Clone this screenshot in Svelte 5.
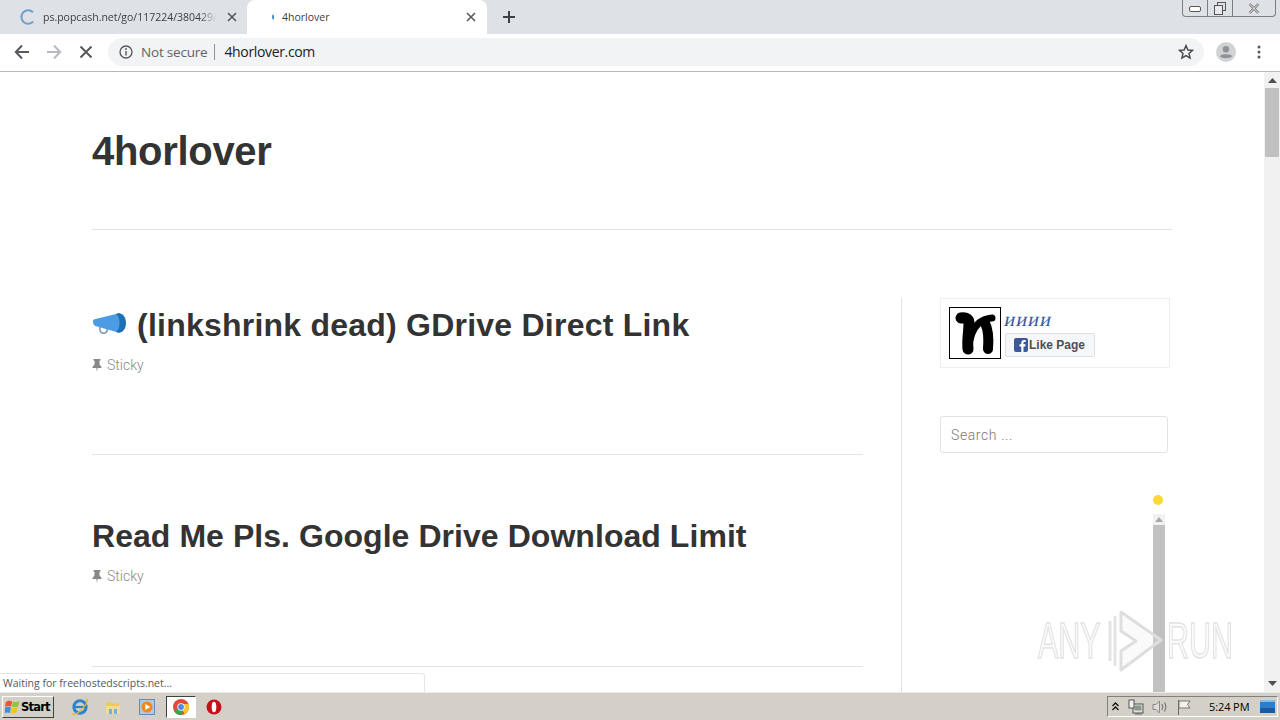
<script>
  const posts = [
    { title: '(linkshrink dead) GDrive Direct Link', icon: true },
    { title: 'Read Me Pls. Google Drive Download Limit', icon: false }
  ];
</script>

<div class="screen">
  <div class="tabstrip">
    <div class="tab inactive">
      <svg class="spinner" width="16" height="16" viewBox="0 0 16 16"><path d="M13 3.200A6.800 6.800 0 1 0 13.200 12.600" fill="none" stroke="#6f9fd0" stroke-width="2"/></svg>
      <span class="tabtitle fade">ps.popcash.net/go/117224/380429/</span>
      <svg class="tabx" width="10" height="10" viewBox="0 0 10 10"><path d="M1 1l8 8M9 1l-8 8" stroke="#55585c" stroke-width="1.600"/></svg>
    </div>
    <div class="tab active">
      <svg class="dot" width="4" height="6" viewBox="0 0 4 6"><path d="M2 0C3.400 2 3.400 4 2 6 .8 4 .8 2 2 0z" fill="#2f7fc8"/></svg>
      <span class="tabtitle">4horlover</span>
      <svg class="tabx" width="10" height="10" viewBox="0 0 10 10"><path d="M1 1l8 8M9 1l-8 8" stroke="#55585c" stroke-width="1.600"/></svg>
    </div>
    <svg class="plus" width="12" height="12" viewBox="0 0 12 12"><path d="M6 0v12M0 6h12" stroke="#3c4043" stroke-width="2"/></svg>
    <div class="winbtns">
      <div class="wb"><svg width="12" height="6" viewBox="0 0 12 6"><rect x=".5" y=".5" width="11" height="5" rx="1.500" fill="#fff" stroke="#555"/></svg></div>
      <div class="wb"><svg width="12" height="13" viewBox="0 0 12 13"><rect x="3.500" y=".5" width="8" height="8" fill="none" stroke="#555"/><rect x=".5" y="3.500" width="8" height="9" fill="#e6e9ee" stroke="#555"/></svg></div>
      <div class="wb wide"><svg width="12" height="11" viewBox="0 0 12 11"><path d="M1.500 1l9 9M10.500 1l-9 9" stroke="#666" stroke-width="2.400"/><path d="M1.500 1l9 9M10.500 1l-9 9" stroke="#fff" stroke-width="1"/></svg></div>
    </div>
  </div>

  <div class="toolbar">
    <svg class="nav" width="16" height="16" viewBox="0 0 16 16"><path d="M15 8H2M8 1.500L1.800 8 8 14.500" fill="none" stroke="#55585c" stroke-width="2"/></svg>
    <svg class="nav fwd" width="16" height="16" viewBox="0 0 16 16"><path d="M1 8h13M8 1.500L14.200 8 8 14.500" fill="none" stroke="#b6b9bd" stroke-width="2"/></svg>
    <svg class="nav stop" width="14" height="14" viewBox="0 0 14 14"><path d="M1.500 1.500l11 11M12.500 1.500l-11 11" stroke="#55585c" stroke-width="2"/></svg>
    <div class="omnibox">
      <svg width="14" height="14" viewBox="0 0 14 14"><circle cx="7" cy="7" r="6" fill="none" stroke="#55585c" stroke-width="1.300"/><path d="M7 6v4.400" stroke="#55585c" stroke-width="1.400"/><circle cx="7" cy="4" r=".9" fill="#55585c"/></svg>
      <span class="notsecure">Not secure</span>
      <span class="sep"></span>
      <span class="url">4horlover.com</span>
      <svg class="star" width="16" height="16" viewBox="0 0 16 16"><path d="M8 1.600l1.900 4.400 4.700.4-3.600 3.100 1.100 4.600L8 11.600l-4.100 2.500L5 9.500 1.400 6.400l4.700-.4z" fill="none" stroke="#44474a" stroke-width="1.400"/></svg>
    </div>
    <svg class="avatar" width="20" height="20" viewBox="0 0 20 20"><circle cx="10" cy="10" r="10" fill="#d0d2d4"/><circle cx="10" cy="7.200" r="3.200" fill="#8f9296"/><path d="M3.800 14.200c1.500-2.600 10.900-2.600 12.400 0-1.500 2.600-10.900 2.600-12.400 0z" fill="#8f9296"/></svg>
    <svg class="menu" width="4" height="14" viewBox="0 0 4 14"><circle cx="2" cy="2" r="1.500" fill="#55585c"/><circle cx="2" cy="7" r="1.500" fill="#55585c"/><circle cx="2" cy="12" r="1.500" fill="#55585c"/></svg>
  </div>

  <div class="viewport">
    <div class="page">
      <header class="site"><h1>4horlover</h1></header>
      <div class="layout">
        <main>
          {#each posts as post}
            <article>
              <h2>
                {#if post.icon}
                  <svg class="horn" width="35" height="24" viewBox="0 0 35 24"><path d="M1 9.500C1 8 2 7 3.500 7L28 1v20L12 16.500 3.500 14C2 13.500 1 12 1 9.500z" fill="#4b9ce2"/><path d="M24 2c5-2.500 10 1.500 10 9s-5 11-10 9c2.500-2 3.500-5 3.500-9S26.500 4 24 2z" fill="#1f6fb5"/><path d="M8 15c-1 5 2 7 5 6 2-.8 2.500-2.500 2-4" fill="none" stroke="#7d98ac" stroke-width="1.500"/></svg>
                {/if}
                {post.title}
              </h2>
              <div class="meta">
                <svg width="10" height="13" viewBox="0 0 10 13"><path d="M1.500 0h7v1.200L7.500 2v3.500L9.500 8v1H5.600L5 13l-.6-4H.5V8l2-2.500V2l-1-.8z" fill="#888"/></svg>
                <span>Sticky</span>
              </div>
            </article>
          {/each}
        </main>
        <aside>
          <div class="fb">
            <div class="logo">
              <svg width="50" height="50" viewBox="0 0 50 50"><path d="M11 10c5-1 8 1 8 5 0 9-2 17-1 26" fill="none" stroke="#000" stroke-width="11" stroke-linecap="round" stroke-linejoin="round"/><path d="M20 32c2-9 7-17 14-20 3-1 5-2 8-2" fill="none" stroke="#000" stroke-width="7" stroke-linecap="round"/><path d="M35 15c3 6 4 14 3 26" fill="none" stroke="#000" stroke-width="10" stroke-linecap="round"/></svg>
            </div>
            <div class="fbtext">
              <div class="fbname"><span>ииии</span></div>
              <div class="like">
                <svg width="14" height="14" viewBox="0 0 14 14"><rect width="14" height="14" rx="2" fill="#3b5998"/><path d="M9.500 14V8.500h1.800l.3-2.200H9.500V5c0-.7.2-1.100 1.100-1.100h1.100V2c-.3 0-.9-.1-1.600-.1-1.700 0-2.800 1-2.800 2.900v1.500H5.500v2.200h1.800V14z" fill="#fff"/></svg>
                <span>Like Page</span>
              </div>
            </div>
          </div>
          <div class="search">Search ...</div>
          <div class="widget">
            <div class="yellow"></div>
            <div class="miniup"><svg width="8" height="5" viewBox="0 0 8 5"><path d="M4 0l4 5H0z" fill="#a9a9a9"/></svg></div>
            <div class="minibar"></div>
          </div>
        </aside>
      </div>
    </div>
    <div class="scrollbar">
      <svg class="sb-up" width="9" height="5" viewBox="0 0 9 5"><path d="M4.500 0L9 5H0z" fill="#505050"/></svg>
      <div class="thumb"></div>
      <div class="sb-space"></div>
      <svg class="sb-down" width="9" height="5" viewBox="0 0 9 5"><path d="M4.500 5L9 0H0z" fill="#505050"/></svg>
    </div>

    <div class="status">Waiting for freehostedscripts.net...</div>
    <div class="watermark">
      <span class="wm-a">ANY</span>
      <svg width="56" height="64" viewBox="0 0 56 64">
        <path d="M2 12v40M7 7v50" fill="none" stroke="#e4e4e4" stroke-width="3"/>
        <path d="M13 3l40 28-40 30V42l15-10-15-10z" fill="rgba(235,235,235,.25)" stroke="#dedede" stroke-width="3" stroke-linejoin="round"/>
      </svg>
      <span class="wm-r">RUN</span>
    </div>
  </div>

  <div class="taskbar">
    <div class="start">
      <svg width="16" height="16" viewBox="0 0 20 18"><path d="M1 3c3-2 5-2 8-1L7.500 8.500C5 7.500 3 7.500 0 9z" fill="#e8562a"/><path d="M10 2c3 1 5 1 8-.5L16.500 8c-3 1.500-5 1.500-8 .5z" fill="#8cc63f"/><path d="M0 10c3-1.500 5-1.500 7.500-.5L6 16.500c-2-1-4-1-7 .5z" fill="#3c8fd8"/><path d="M8.500 9.500c3 1 5 1 7.500-.5L14.500 15.500c-3 1.500-5 1.500-8 .5z" fill="#f6c324"/></svg>
      <span>Start</span>
    </div>
    <div class="quick">
      <span class="qi"><svg width="18" height="18" viewBox="0 0 16 16"><circle cx="8" cy="8" r="5.500" fill="none" stroke="#2f82cf" stroke-width="2.600"/><path d="M3 8h10" stroke="#2f82cf" stroke-width="2"/><path d="M1 14c2 2 8-2 12-8 2-3 2-5 0-5" fill="none" stroke="#e5b53a" stroke-width="1.200"/></svg></span>
      <span class="qi"><svg width="16" height="16" viewBox="0 0 16 16"><path d="M1 3h5l1 1.500h7V15H1z" fill="#e9c96a"/><path d="M1 7h14v8H1z" fill="#f2dc90"/><path d="M4 15v-5h3v5zM9 15v-5h3v5z" fill="#6fb3d6"/></svg></span>
      <span class="qi"><svg width="16" height="16" viewBox="0 0 16 16"><rect x=".5" y=".5" width="15" height="15" fill="#a9cbe6" stroke="#5f8fc0"/><circle cx="8" cy="8" r="5.500" fill="#f08a1d"/><path d="M6.300 5l5 3-5 3z" fill="#fff"/></svg></span>
      <span class="qi chrome"><svg width="16" height="16" viewBox="0 0 16 16"><circle cx="8" cy="8" r="8" fill="#dd4b39"/><path d="M8 8L1 12a8 8 0 0 0 7 4 8 8 0 0 0 0-.1L11.500 9z" fill="#3da24d"/><path d="M8 8l3.500 7A8 8 0 0 0 15.500 5H8z" fill="#f8c52c"/><circle cx="8" cy="8" r="3.700" fill="#fff"/><circle cx="8" cy="8" r="2.900" fill="#4a8be8"/></svg></span>
      <span class="qi"><svg width="16" height="16" viewBox="0 0 16 16"><circle cx="8" cy="8" r="7.500" fill="#c8101b"/><ellipse cx="8" cy="8" rx="2.300" ry="5.300" fill="#fff"/></svg></span>
    </div>
    <div class="tray">
      <svg width="7" height="9" viewBox="0 0 7 9"><path d="M.5 4l3-3 3 3M.5 8l3-3 3 3" fill="none" stroke="#111" stroke-width="1.300"/></svg>
      <svg class="t1" width="16" height="16" viewBox="0 0 16 16"><rect x="5" y="5" width="10" height="9" fill="#dfe3d8" stroke="#555"/><rect x="6.500" y="6.500" width="7" height="5" fill="#8a978f"/><rect x="1" y="1" width="5" height="8" fill="#f0f0f0" stroke="#555"/><path d="M7 15h7" stroke="#666"/></svg>
      <svg width="16" height="16" viewBox="0 0 16 16"><path d="M1 5.500h3L7.500 2v12L4 10.500H1z" fill="#ddd" stroke="#888"/><path d="M10 5c1 2 1 4 0 6M12.500 3.500c1.700 3 1.700 6 0 9" fill="none" stroke="#777" stroke-width="1.200"/></svg>
      <svg width="16" height="16" viewBox="0 0 16 16"><path d="M2.500 1v15" stroke="#666"/><path d="M3 2h11l-2.500 3.500L14 9H3z" fill="#f3f1ea" stroke="#777"/></svg>
      <span class="clock">5:24 PM</span>
      <svg class="desk" width="15" height="13" viewBox="0 0 15 13"><rect width="15" height="13" fill="#2e7dc8"/><rect y="8" width="15" height="5" fill="#1a5a9e"/><rect y="0" width="15" height="2" fill="#8bbbe2"/></svg>
    </div>
  </div>
</div>

<style>
  :global(body) { margin: 0; background: #fff; }
  .screen {
    width: 1280px; height: 720px; overflow: hidden;
    display: flex; flex-direction: column;
    font-family: "Liberation Sans", sans-serif;
  }
  .tabstrip {
    height: 34px; background: #dee1e6; display: flex; align-items: stretch;
    padding-left: 8px; flex: none;
  }
  .tab {
    display: flex; align-items: center; width: 239px; box-sizing: border-box;
    font: 10.500px/13px "Open Sans", sans-serif; color: #3c4043;
  }
  .tab.inactive { padding-left: 12px; }
  .tab.active {
    background: #fff; border-radius: 8px 8px 0 0; padding-left: 24px; width: 240px;
  }
  .spinner { flex: none; margin-right: 7px; }
  .dot { flex: none; margin-right: 7px; }
  .tabtitle { flex: 1; white-space: nowrap; overflow: hidden; }
  .fade { -webkit-mask-image: linear-gradient(90deg, #000 90%, transparent 100%); mask-image: linear-gradient(90deg, #000 90%, transparent 100%); }
  .tabx { flex: none; margin: 0 11px 0 9px; }
  .inactive .tabx { margin: 0 10px 0 10px; }
  .plus { align-self: center; margin-left: 16px; }
  .winbtns {
    margin-left: auto; margin-right: 4px; height: 16px; display: flex;
    border: 1px solid #7c7f85; border-top: none; border-radius: 0 0 4px 4px;
  }
  .wb { width: 24px; display: flex; align-items: center; justify-content: center; border-left: 1px solid #7c7f85; padding-top: 1px; }
  .wb:first-child { border-left: none; }
  .wb.wide { width: 42px; }
  .toolbar {
    height: 38px; box-sizing: border-box; background: #fff; border-bottom: 1px solid #b8b8b8; flex: none;
    display: flex; align-items: center; padding-bottom: 2px;
  }
  .nav { flex: none; margin-left: 14px; }
  .nav.fwd { margin-left: 16px; }
  .nav.stop { margin-left: 17px; }
  .omnibox {
    margin-left: 15px; width: 1096px; height: 28px; background: #f1f3f4; border-radius: 14px;
    display: flex; align-items: center; padding-left: 11px; box-sizing: border-box;
    font: 14px "Open Sans", sans-serif; flex: none;
  }
  .notsecure { margin-left: 8px; color: #5f6368; font-size: 13.500px; letter-spacing: -.2px; }
  .sep { width: 1px; height: 16px; background: #8f9296; margin: 0 9px 0 7px; }
  .url { color: #202124; font-size: 14px; letter-spacing: -.35px; }
  .star { margin-left: auto; margin-right: 10px; }
  .avatar { margin-left: 12px; flex: none; }
  .menu { margin-left: 21px; flex: none; }

  .viewport { flex: 1; display: flex; position: relative; min-height: 0; }
  .page { flex: 1; padding-left: 92px; overflow: hidden; }
  .site { width: 1080px; height: 157px; border-bottom: 1px solid #e3e3e3; }
  h1 {
    margin: 0; padding-top: 54px; font-size: 40px; line-height: 50px; font-weight: 700;
    color: #333; letter-spacing: -.3px;
  }
  .layout { display: flex; margin-top: 68px; }
  main { width: 771px; }
  article { border-bottom: 1px solid #e3e3e3; padding-bottom: 76px; margin-bottom: 54px; }
  article:nth-child(2) { padding-bottom: 77px; }
  h2 {
    margin: 0; font-size: 32px; line-height: 54px; font-weight: 700; color: #333;
    white-space: nowrap; letter-spacing: .05px;
    display: flex; align-items: center;
  }
  article:first-child h2 { letter-spacing: .23px; }
  .horn { margin-right: 10px; flex: none; position: relative; top: -1px; }
  .meta {
    height: 26px; display: flex; align-items: center; gap: 5px;
    font: 300 14px Roboto, sans-serif; color: #8a8a8a;
  }
  aside {
    margin-left: 38px; border-left: 1px solid #e3e3e3; padding-left: 38px; width: 232px; flex: none;
  }
  .fb {
    width: 230px; height: 70px; box-sizing: border-box; border: 1px solid #eeeff2;
    padding: 8px; display: flex; gap: 4px;
  }
  .logo { width: 50px; height: 50px; border: 1px solid #000; flex: none; }
  .logo svg { display: block; }
  .fbname { font: 20px/20px "Liberation Serif", serif; color: #3b5998; margin-top: 2px; height: 23px; letter-spacing: 1.200px; }
  .fbname span { display: inline-block; transform: skewX(-12deg); }
  .like {
    width: 90px; height: 24px; box-sizing: border-box; border: 1px solid #dddfe2; border-radius: 2px;
    background: #f6f7f9; display: flex; align-items: center; gap: 1px; padding: 0 0 1px 8px;
    font: 700 12px "Liberation Sans", sans-serif; color: #4b4f56; margin-top: 1px;
  }
  .like svg { flex: none; margin-top: 1px; }
  .search {
    margin-top: 48px; width: 228px; height: 37px; box-sizing: border-box; border: 1px solid #e3e3e3;
    border-radius: 3px; padding-left: 10px; font: 300 14px/37px Roboto, sans-serif; color: #777; letter-spacing: .6px;
  }
  .widget { margin-top: 42px; padding-left: 213px; }
  .yellow { width: 10px; height: 10px; border-radius: 50%; background: #fdd835; }
  .miniup { width: 12px; height: 11px; margin-top: 9px; background: #f1f1f1; display: flex; align-items: center; justify-content: center; }
  .minibar { width: 12px; height: 300px; background: #c1c1c1; }

  .scrollbar { width: 16px; flex: none; background: #f1f1f1; display: flex; flex-direction: column; align-items: center; }
  .sb-up { margin-top: 6px; flex: none; }
  .thumb { width: 14px; height: 69px; background: #c1c1c1; margin-top: 5px; flex: none; }
  .sb-space { flex: 1; }
  .sb-down { margin-bottom: 6px; flex: none; }

  .status {
    position: absolute; left: 0; bottom: 0; width: 425px; height: 19px; box-sizing: border-box;
    background: #fff; border: 1px solid #e6e6e6; border-bottom: none; border-left: none; border-radius: 0 3px 0 0;
    font: 10.500px/18px "Open Sans", sans-serif; color: #55585c; padding-left: 3px;
  }
  .watermark {
    position: absolute; left: 1038px; top: 537px; display: flex; align-items: center; gap: 0;
    pointer-events: none;
  }
  .watermark span {
    font: 400 50px/64px "Liberation Sans", sans-serif; color: rgba(235,235,235,.25);
    -webkit-text-stroke: 1.500px #e2e2e2; transform: scaleX(.61); display: inline-block; transform-origin: left center;
    white-space: nowrap; letter-spacing: 0;
  }
  .wm-a { width: 70px; }
  .wm-r { width: 60px; margin-left: 3px; }
  .taskbar {
    height: 28px; flex: none; background: #d4d0c8; border-top: 1px solid #ecebe6; box-sizing: border-box;
    display: flex; align-items: center;
  }
  .start {
    margin-left: 2px; width: 52px; height: 22px; box-sizing: border-box; display: flex; align-items: center; gap: 0;
    background: #d4d0c8; border: 1px solid; border-color: #fff #404040 #404040 #fff;
    font: 700 11.500px "DejaVu Sans", sans-serif; color: #000; letter-spacing: -.8px; padding-left: 2px;
  }
  .start svg { flex: none; }
  .quick { display: flex; margin-left: 9px; align-items: center; }
  .qi { width: 33.500px; display: flex; justify-content: center; align-items: center; height: 22px; }
  .qi.chrome {
    width: 30px; box-sizing: border-box; background: #fff; margin: 0 2px;
    border: 1px solid; border-color: #404040 #fff #fff #404040;
  }
  .tray {
    margin-left: auto; margin-right: 2px; height: 21px; width: 171px; box-sizing: border-box; display: flex; align-items: center;
    border: 1px solid; border-color: #808080 #fff #fff #808080; padding-left: 4px; gap: 8px;
    color: #000;
  }
  .t1 { margin-left: 1px; }
  .clock { margin-left: 9px; font: 11px "Open Sans", sans-serif; letter-spacing: -.1px; white-space: nowrap; }
  .desk { margin-left: auto; margin-right: 2px; }
</style>
